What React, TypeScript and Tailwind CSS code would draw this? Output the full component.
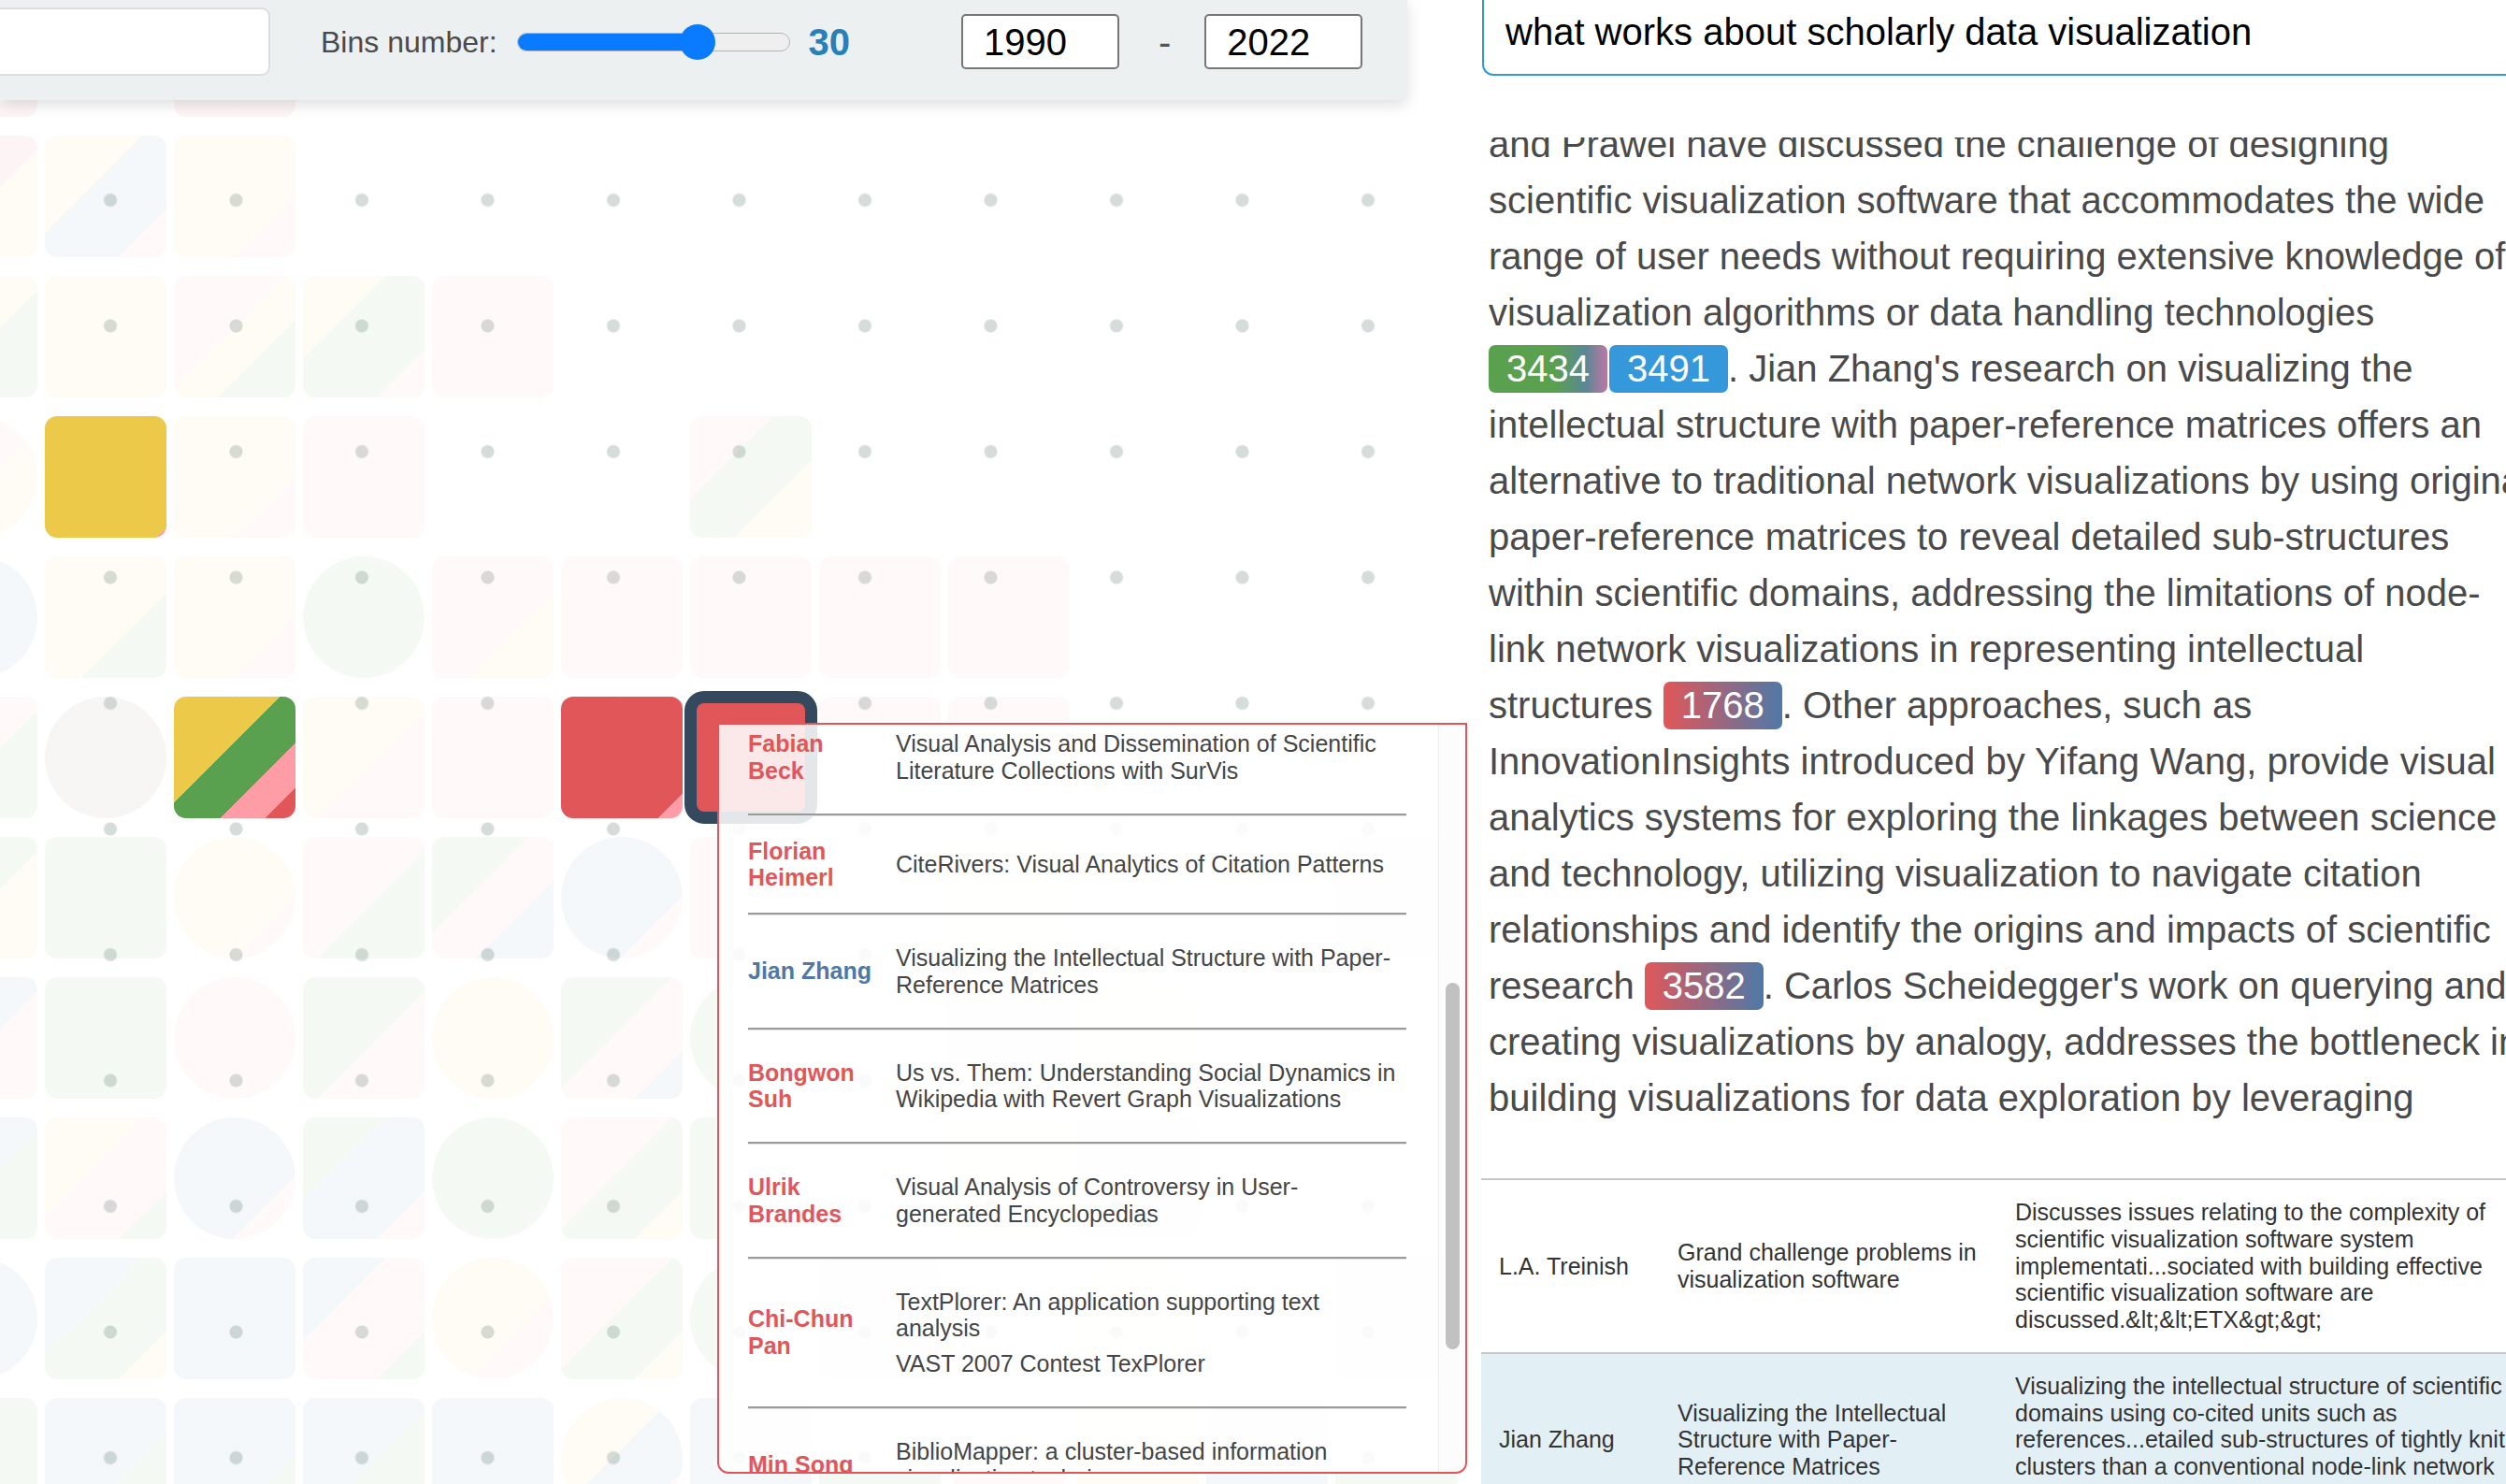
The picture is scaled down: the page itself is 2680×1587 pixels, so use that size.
import React from "react";

// pale tints of the category palette, used at low alpha on the background cells
const TINT: Record<string, string> = {
  y: "237,201,73",
  p: "225,87,89",
  k: "255,157,167",
  g: "89,161,79",
  b: "78,121,167",
  n: "186,176,171",
};

// one string per row, columns -1..10; "." = empty, r = rounded box, e = circle
const GRID: string[][] = [
  "r-yp . r-p . . . . . . . . .",
  "r-py r-ybk r-yk . . . . . . . . .",
  "r-yg r-y r-kyg r-ygk r-k . . . . . . .",
  "e-ky Y r-yk r-kk . . r-kgy . . . . .",
  "e-b r-yg r-yk e-g r-ky r-k r-k r-k r-k . . .",
  "r-kg e-n M r-yk r-k R S r-k r-k . . .",
  "r-gy r-gg e-yk r-kg r-gkb e-bk r-k e-g r-y r-k e-g r-b",
  "r-bk r-g e-k r-gk e-y r-gkb e-g r-k r-b e-y r-g r-k",
  "r-bg r-ykg e-bk r-gbk e-g r-kgy r-g e-k r-y r-b e-g r-k",
  "e-b r-bgy r-b r-bkg e-yk r-kgy e-g r-b r-k e-y r-g r-b",
  "r-g r-bg r-bg r-bg r-b e-ybk r-b r-g e-k r-y r-b r-g",
].map((r) => r.split(" "));

const paleBg = (colors: string, seed: number) => {
  const n = colors.length;
  let stops: number[];
  if (n === 1) stops = [100];
  else if (n === 2) stops = [56 + (seed % 3) * 9, 100];
  else stops = [34 + (seed % 3) * 6, 68 + (seed % 2) * 12, 100];
  let prev = 0;
  const parts = colors.split("").map((c, i) => {
    const a = c === "n" ? 0.12 : 0.06;
    const s = `rgba(${TINT[c]},${a}) ${prev}% ${stops[i]}%`;
    prev = stops[i];
    return s;
  });
  return `linear-gradient(135deg, ${parts.join(", ")})`;
};

const Cell = ({ code, seed }: { code: string; seed: number }) => {
  if (code === ".") return <div />;
  if (code === "Y")
    return <div className="rounded-[13px] bg-[linear-gradient(135deg,#edc949_0%,#edc949_96%,#ff9da7_96%)]" />;
  if (code === "M")
    return (
      <div className="rounded-[13px] bg-[linear-gradient(135deg,#edc949_0%,#edc949_43.5%,#59a14f_43.5%,#59a14f_69%,#ff9da7_69%,#ff9da7_87.5%,#e15759_87.5%)]" />
    );
  if (code === "R")
    return <div className="rounded-[13px] bg-[linear-gradient(135deg,#e15759_0%,#e15759_90%,#ff9da7_90%)]" />;
  if (code === "S")
    return (
      <div className="-m-[6px] rounded-[21px] border-[13px] border-[#34495e] bg-[#34495e]">
        <div className="h-full rounded-[8px] bg-[#e15759]" />
      </div>
    );
  const [shape, colors] = code.split("-");
  return (
    <div
      className={shape === "e" ? "rounded-full" : "rounded-[13px]"}
      style={{ background: paleBg(colors, seed) }}
    />
  );
};

const PAPERS = [
  {
    name: "Fabian Beck",
    color: "text-[#e15759]",
    title: "Visual Analysis and Dissemination of Scientific Literature Collections with SurVis",
  },
  { name: "Florian Heimerl", color: "text-[#e15759]", title: "CiteRivers: Visual Analytics of Citation Patterns" },
  {
    name: "Jian Zhang",
    color: "text-[#4e79a7]",
    title: "Visualizing the Intellectual Structure with Paper-Reference Matrices",
  },
  {
    name: "Bongwon Suh",
    color: "text-[#e15759]",
    title: "Us vs. Them: Understanding Social Dynamics in Wikipedia with Revert Graph Visualizations",
  },
  {
    name: "Ulrik Brandes",
    color: "text-[#e15759]",
    title: "Visual Analysis of Controversy in User-generated Encyclopedias",
  },
  {
    name: "Chi-Chun Pan",
    color: "text-[#e15759]",
    title: "TextPlorer: An application supporting text analysis",
    venue: "VAST 2007 Contest TexPlorer",
  },
  {
    name: "Min Song",
    color: "text-[#e15759]",
    title: "BiblioMapper: a cluster-based information visualization technique",
  },
];

const Badge = ({ n, bg }: { n: string; bg: string }) => (
  <span className={`inline-block rounded-[7px] px-[19px] leading-[51px] text-white ${bg}`}>{n}</span>
);

const Header = () => (
  <div className="absolute left-0 top-0 z-10 h-[107px] w-[1505px] rounded-br-[6px] bg-[#ecf0f1] pt-[8px] shadow-[0_5px_16px_rgba(0,0,0,0.13)]">
    <div className="flex h-[73px] items-center">
      <div className="-ml-[10px] h-[73px] w-[299px] shrink-0 rounded-[9px] border-2 border-[#dddddd] bg-white" />
      <span className="ml-[54px] text-[32px] text-[#4a4a4a]">Bins number:</span>
      <div className="relative ml-[21px] h-[20px] w-[292px] rounded-full border border-[#b5b5b5] bg-[#efefef]">
        <div className="h-full w-[192px] rounded-l-full bg-[#0a7bff]" />
        <div className="absolute left-[173px] top-[-10px] h-[38px] w-[38px] rounded-full bg-[#0a7bff]" />
      </div>
      <span className="ml-[20px] text-[40px] font-bold text-[#2980b9]">30</span>
      <div className="ml-[119px] flex h-[59px] w-[169px] items-center rounded-[5px] border-2 border-[#777777] bg-white pl-[22px] text-[40px] text-black">
        1990
      </div>
      <span className="ml-[42px] text-[40px] text-[#555555]">-</span>
      <div className="ml-[36px] flex h-[59px] w-[169px] items-center rounded-[5px] border-2 border-[#777777] bg-white pl-[22px] text-[40px] text-black">
        2022
      </div>
    </div>
  </div>
);

const Popup = () => (
  <div className="absolute left-[767px] top-[773px] z-20 flex h-[803px] w-[802px] overflow-hidden rounded-b-[12px] border-2 border-[#e15759] bg-white/[0.87]">
    <div className="min-w-0 flex-1 overflow-hidden">
      <div className="-mt-[25px] pl-[31px] text-[25px] leading-[28.75px]">
        {PAPERS.map((p, i) => (
          <React.Fragment key={p.name}>
            {i > 0 && <div className="w-[704px] border-t-2 border-b border-t-[#9a9a9a] border-b-[#e4e4e4]" />}
            <div className="flex items-center py-[23px]">
              <div className={`w-[140px] shrink-0 font-bold ${p.color}`}>{p.name}</div>
              <div className="ml-[18px] w-[538px] py-[8px] text-[#454545]">
                <p>{p.title}</p>
                {p.venue && <p className="mt-[9px]">{p.venue}</p>}
              </div>
            </div>
          </React.Fragment>
        ))}
      </div>
    </div>
    <div className="w-[29px] shrink-0 border-l border-[#ececec] bg-[#fafafa]/60">
      <div className="ml-[7px] mt-[276px] h-[392px] w-[15px] rounded-full bg-[#c1c1c1]" />
    </div>
  </div>
);

const App = () => (
  <div className="flex h-[1587px] w-[2680px] overflow-hidden bg-white font-['Liberation_Sans',Arial,sans-serif]">
    {/* left: bin map */}
    <div className="relative h-full w-[1583px] shrink-0 overflow-hidden">
      <div className="h-full overflow-hidden bg-[radial-gradient(circle,#d5dcda_6.5px,transparent_7.5px)] bg-[length:134.5px_134.5px] bg-[position:50.75px_12.25px]">
        <div className="-ml-[90px] -mt-[5px] grid grid-cols-[repeat(12,130px)] auto-rows-[130px] gap-x-[8px] gap-y-[20px]">
          {GRID.map((row, r) => row.map((code, c) => <Cell key={`${r}-${c}`} code={code} seed={r * 12 + c} />))}
        </div>
      </div>
      <Header />
      <Popup />
    </div>

    {/* right: answer text + table */}
    <div className="min-w-0 flex-1 overflow-hidden">
      <div className="ml-[2px] h-[81px] w-[1200px] rounded-bl-[12px] border-b-2 border-l-2 border-[#3498db] pl-[23px] pt-[11px] text-[40px] leading-[46px] text-black">
        what works about scholarly data visualization
      </div>
      <div className="ml-[9px] mt-[66px] h-[1063px] overflow-hidden">
        <p className="-mt-[23px] w-[1116px] text-[40px] leading-[60px] text-[#4a4a4a]">
          and Prawel have discussed the challenge of designing scientific visualization software that accommodates
          the wide range of user needs without requiring extensive knowledge of visualization algorithms or data
          handling technologies{" "}
          <span className="inline-flex gap-[2px]">
            <Badge n="3434" bg="bg-[linear-gradient(90deg,#59a14f_55%,#5b8796_82%,#af7aa1_97%)]" />
            <Badge n="3491" bg="bg-[#3498db]" />
          </span>
          . Jian Zhang's research on visualizing the intellectual structure with paper-reference matrices offers an
          alternative to traditional network visualizations by using original paper-reference matrices to reveal
          detailed sub-structures within scientific domains, addressing the limitations of node-link network
          visualizations in representing intellectual structures{" "}
          <Badge n="1768" bg="bg-[linear-gradient(90deg,#e15759,#4e79a7)]" />. Other approaches, such as
          InnovationInsights introduced by Yifang Wang, provide visual analytics systems for exploring the linkages
          between science and technology, utilizing visualization to navigate citation relationships and identify the
          origins and impacts of scientific research{" "}
          <Badge n="3582" bg="bg-[linear-gradient(90deg,#e15759,#4e79a7)]" />. Carlos Scheidegger's work on querying
          and creating visualizations by analogy, addresses the bottleneck in building visualizations for data
          exploration by leveraging previously constructed visualizations.
        </p>
      </div>

      <div className="ml-[1px] mt-[50px] w-[1152px] border-t-2 border-[#c5c9cc] text-[25px] leading-[28.75px] text-[#333333]">
        <div className="grid grid-cols-[191px_361px_600px] items-center">
          <div className="px-[19px] py-[20px]">L.A. Treinish</div>
          <div className="px-[19px] py-[20px]">Grand challenge problems in visualization software</div>
          <div className="px-[19px] py-[20px]">
            {
              "Discusses issues relating to the complexity of scientific visualization software system implementati...sociated with building effective scientific visualization software are discussed.&lt;&lt;ETX&gt;&gt;"
            }
          </div>
        </div>
        <div className="grid grid-cols-[191px_361px_600px] items-center border-t-2 border-[#c5c9cc] bg-[#e2f0f6]">
          <div className="px-[19px] py-[20px]">Jian Zhang</div>
          <div className="px-[19px] py-[20px]">
            Visualizing the Intellectual Structure with Paper-Reference Matrices
          </div>
          <div className="px-[19px] py-[20px]">
            Visualizing the intellectual structure of scientific domains using co-cited units such as
            references...etailed sub-structures of tightly knit clusters than a conventional node-link network
            visualization.
          </div>
        </div>
      </div>
    </div>
  </div>
);

export default App;
